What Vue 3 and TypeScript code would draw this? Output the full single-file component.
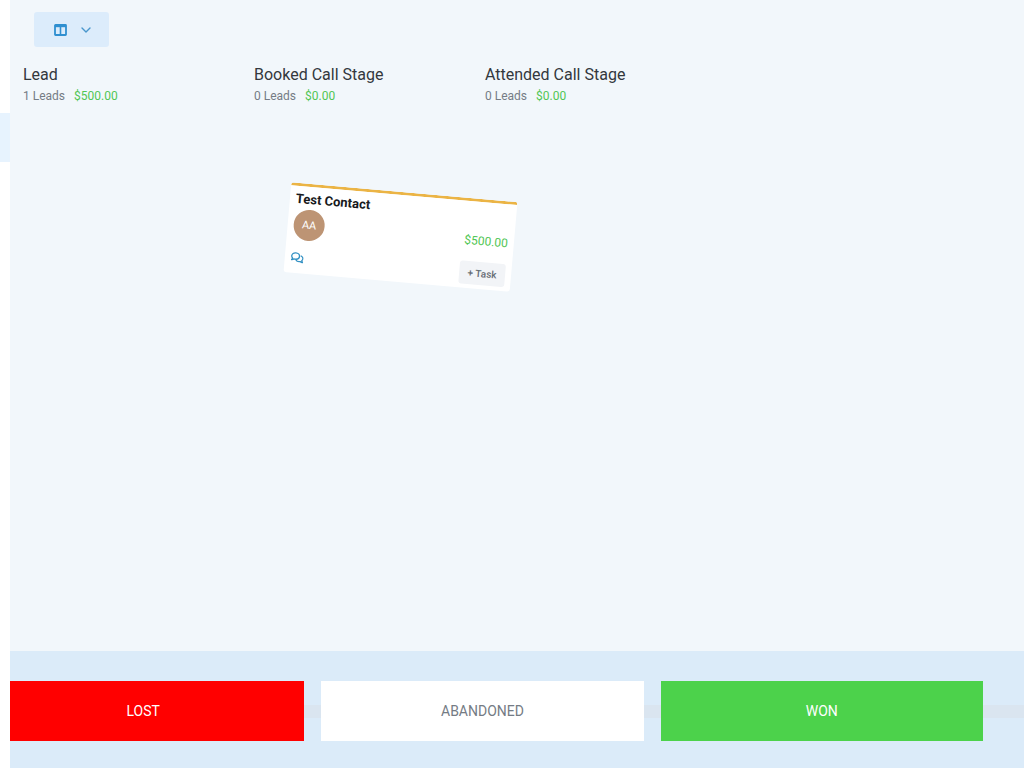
<script setup lang="ts">
interface Stage {
  name: string
  leads: number
  value: string
}

interface DropZone {
  label: string
  kind: string
}

const stages: Stage[] = [
  { name: 'Lead', leads: 1, value: '$500.00' },
  { name: 'Booked Call Stage', leads: 0, value: '$0.00' },
  { name: 'Attended Call Stage', leads: 0, value: '$0.00' },
]

const zones: DropZone[] = [
  { label: 'LOST', kind: 'lost' },
  { label: 'ABANDONED', kind: 'abandoned' },
  { label: 'WON', kind: 'won' },
]
</script>

<template>
  <div class="app">
    <nav class="rail" aria-label="Sidebar">
      <div class="rail-active"></div>
    </nav>
    <main class="main">
      <div class="toolbar">
        <button class="view-toggle" type="button" aria-label="Change view">
          <svg width="13" height="12" viewBox="0 0 13 12" fill="none" stroke="#2f8fd0">
            <rect x="1" y="1" width="11" height="10" rx="0.500" stroke-width="1.8" />
            <path d="M1 2h11" stroke-width="2.4" />
            <path d="M6.500 3v8" stroke-width="1.6" />
          </svg>
          <svg width="10" height="6" viewBox="0 0 10 6" fill="none" stroke="#4a97cc" stroke-width="1.4" stroke-linecap="round" stroke-linejoin="round">
            <path d="M1 1l4 4 4-4" />
          </svg>
        </button>
      </div>

      <div class="stages">
        <section v-for="stage in stages" :key="stage.name" class="stage">
          <h2>{{ stage.name }}</h2>
          <p><span>{{ stage.leads }} Leads</span><span class="money">{{ stage.value }}</span></p>
        </section>
      </div>

      <footer class="dropbar">
        <div class="zones">
          <button v-for="zone in zones" :key="zone.kind" type="button" class="zone" :class="zone.kind">
            {{ zone.label }}
          </button>
        </div>
      </footer>

      <!-- Card being dragged over the board -->
      <article class="card">
        <h3>Test Contact</h3>
        <div class="row">
          <span class="avatar">AA</span>
          <span class="money">$500.00</span>
        </div>
        <div class="row">
          <svg width="13" height="12" viewBox="0 0 13 12" fill="none" stroke="#3592c4" stroke-width="1.3" stroke-linejoin="round" stroke-linecap="round">
            <path d="M4.7 1C2.500 1 .8 2.300.8 4.100c0 .9.4 1.600 1 2.200L1 8c.9 0 1.700-.4 2.300-.9.4.1.9.2 1.400.2 2.200 0 3.900-1.400 3.900-3.200S6.900 1 4.700 1z" />
            <path d="M10.200 3.600c1.200.5 2 1.500 2 2.600 0 .8-.4 1.500-1 2.100l.9 1.800c-1 0-1.800-.4-2.400-.9-2 .5-3.700-.1-4.500-1.400" />
          </svg>
          <button class="task" type="button">+ Task</button>
        </div>
      </article>
    </main>
  </div>
</template>

<style>
body {
  margin: 0;
}
</style>

<style scoped>
.app {
  display: flex;
  min-height: 100vh;
  background: #fff;
  font-family: Roboto, "Liberation Sans", sans-serif;
  color: #33383d;
}

button {
  border: 0;
  font-family: inherit;
  cursor: pointer;
}

h2,
h3,
p {
  margin: 0;
  font-weight: 400;
}

.rail {
  flex: 0 0 10px;
  padding-top: 113px;
}

.rail-active {
  height: 49px;
  background: #e7f3fe;
}

.main {
  position: relative;
  flex: 1;
  min-width: 0;
  display: flex;
  flex-direction: column;
  overflow: hidden;
  background: #f2f7fb;
}

.toolbar {
  padding: 12px 24px 0;
}

.view-toggle {
  display: flex;
  align-items: center;
  gap: 14px;
  height: 35px;
  padding: 0 18px 0 20px;
  border-radius: 3px;
  background: #dcecfb;
}

.stages {
  display: grid;
  grid-template-columns: repeat(3, 231px);
  flex: 1;
  align-content: start;
  padding: 18px 13px;
}

.stage h2 {
  font-size: 16px;
  line-height: 20px;
}

.stage p {
  display: flex;
  gap: 9px;
  margin-top: 2px;
  font-size: 12px;
  line-height: 18px;
  color: #757c85;
}

.money {
  color: #51c654;
}

.dropbar {
  padding: 30px 41px 27px 0;
  background: #dbebf9;
}

.zones {
  display: grid;
  grid-template-columns: repeat(3, 1fr);
  gap: 17px;
  margin-left: -28px;
  margin-right: -41px;
  padding-right: 41px;
  background: linear-gradient(#dae5f0, #dae5f0) center / 100% 13px no-repeat;
}

.zone {
  height: 60px;
  border-radius: 0;
  font-size: 14px;
  color: #fff;
}

.zone.lost {
  background: #f00;
}

.zone.abandoned {
  background: #fff;
  color: #747b84;
}

.zone.won {
  background: #4cd24b;
}

.card {
  position: absolute;
  top: 192px;
  left: 277px;
  box-sizing: border-box;
  width: 227px;
  padding: 5px 6px 4px 6px;
  border-top: 3px solid #ebb445;
  border-radius: 3px;
  background: #fff;
  transform: rotate(5deg);
}

.card h3 {
  font-size: 13px;
  font-weight: 700;
  line-height: 16px;
  color: #17191c;
}

.row {
  display: flex;
  align-items: center;
  justify-content: space-between;
}

.row + .row {
  margin-top: 6px;
}

.card h3 + .row {
  margin-top: 2px;
}

.avatar {
  display: grid;
  place-items: center;
  width: 31px;
  height: 31px;
  border-radius: 50%;
  background: #bd9474;
  color: #fff;
  font-size: 11px;
}

.card .money {
  font-size: 12px;
}

.task {
  height: 23px;
  width: 46px;
  padding: 0;
  border-radius: 3px;
  background: #f2f4f7;
  color: #666c74;
  font-size: 10px;
  font-weight: 500;
}
</style>
